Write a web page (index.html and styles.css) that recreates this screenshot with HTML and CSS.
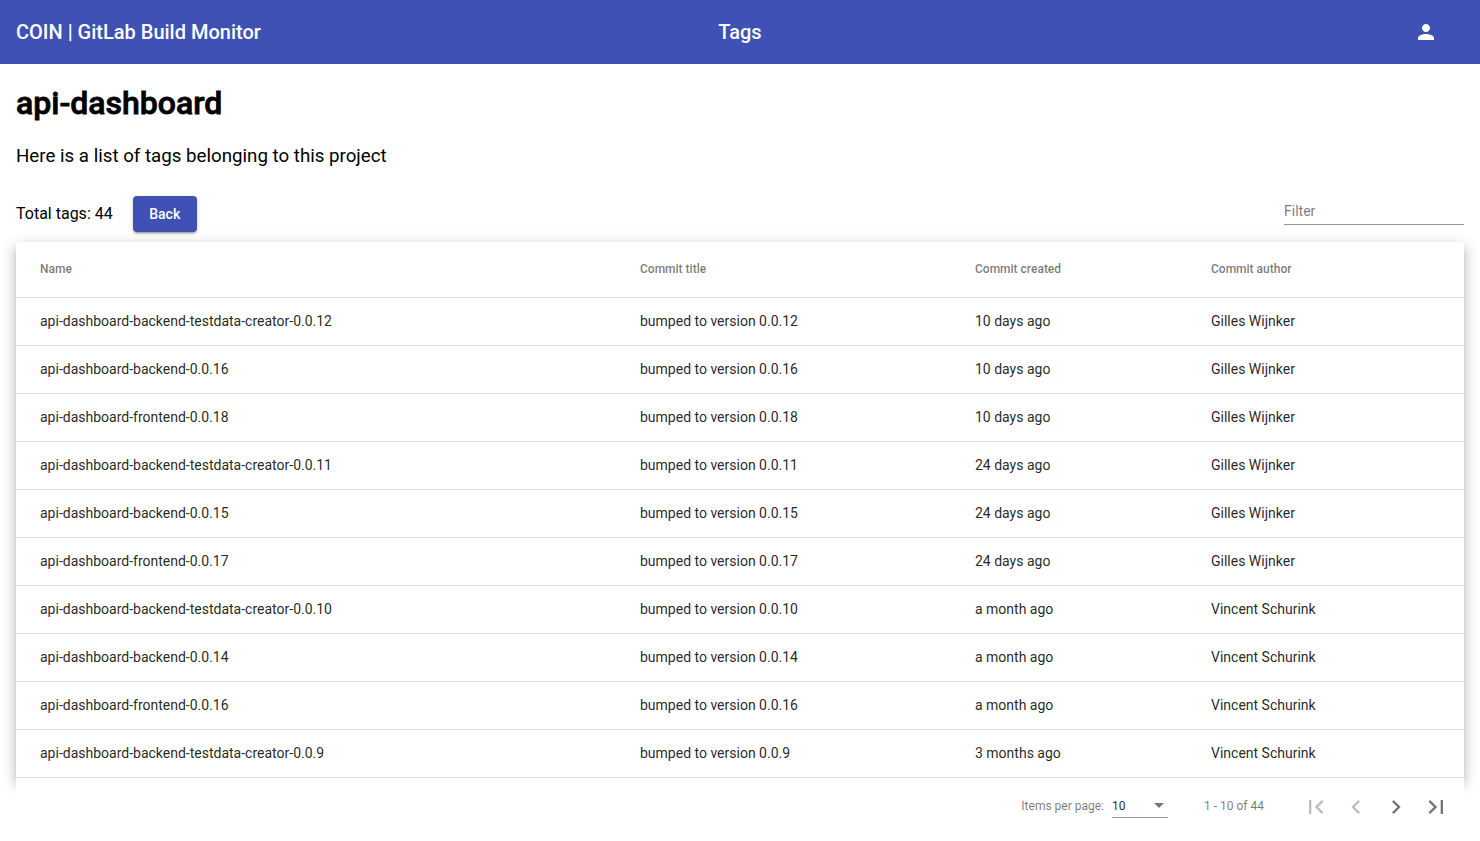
FILE: index.html
```html
<!DOCTYPE html>
<html>
	<head>
		<title>Tags</title>
		<link rel="stylesheet" href="styles.css">
	</head>
	<body>
		<header class="toolbar">
			<span class="brand">COIN | GitLab Build Monitor</span>
			<span class="page-title">Tags</span>
			<span class="user-slot">
				<svg class="user-icon" viewBox="0 0 24 24" width="24" height="24"><path d="M12 12c2.21 0 4-1.79 4-4s-1.79-4-4-4-4 1.79-4 4 1.79 4 4 4zm0 2c-2.67 0-8 1.34-8 4v2h16v-2c0-2.66-5.33-4-8-4z"/></svg>
			</span>
		</header>
		<main class="content">
			<h1>api-dashboard</h1>
			<p class="intro">Here is a list of tags belonging to this project</p>
			<div class="actions">
				<span class="total">Total tags: 44</span>
				<button class="back-button">Back</button>
				<div class="filter"><span>Filter</span></div>
			</div>
			<table class="tags-table">
				<colgroup>
					<col class="col-name">
					<col class="col-title">
					<col class="col-created">
					<col class="col-author">
				</colgroup>
				<thead>
					<tr><th>Name</th><th>Commit title</th><th>Commit created</th><th>Commit author</th></tr>
				</thead>
				<tbody>
					<tr><td>api-dashboard-backend-testdata-creator-0.0.12</td><td>bumped to version 0.0.12</td><td>10 days ago</td><td>Gilles Wijnker</td></tr>
					<tr><td>api-dashboard-backend-0.0.16</td><td>bumped to version 0.0.16</td><td>10 days ago</td><td>Gilles Wijnker</td></tr>
					<tr><td>api-dashboard-frontend-0.0.18</td><td>bumped to version 0.0.18</td><td>10 days ago</td><td>Gilles Wijnker</td></tr>
					<tr><td>api-dashboard-backend-testdata-creator-0.0.11</td><td>bumped to version 0.0.11</td><td>24 days ago</td><td>Gilles Wijnker</td></tr>
					<tr><td>api-dashboard-backend-0.0.15</td><td>bumped to version 0.0.15</td><td>24 days ago</td><td>Gilles Wijnker</td></tr>
					<tr><td>api-dashboard-frontend-0.0.17</td><td>bumped to version 0.0.17</td><td>24 days ago</td><td>Gilles Wijnker</td></tr>
					<tr><td>api-dashboard-backend-testdata-creator-0.0.10</td><td>bumped to version 0.0.10</td><td>a month ago</td><td>Vincent Schurink</td></tr>
					<tr><td>api-dashboard-backend-0.0.14</td><td>bumped to version 0.0.14</td><td>a month ago</td><td>Vincent Schurink</td></tr>
					<tr><td>api-dashboard-frontend-0.0.16</td><td>bumped to version 0.0.16</td><td>a month ago</td><td>Vincent Schurink</td></tr>
					<tr><td>api-dashboard-backend-testdata-creator-0.0.9</td><td>bumped to version 0.0.9</td><td>3 months ago</td><td>Vincent Schurink</td></tr>
				</tbody>
			</table>
			<div class="paginator">
				<span class="per-page-label">Items per page:</span>
				<div class="per-page-select"><span>10</span><i class="arrow"></i></div>
				<span class="range">1 - 10 of 44</span>
				<div class="pager-buttons">
					<button class="pager-button" disabled><svg viewBox="0 0 24 24" width="28" height="28"><path d="M18.41 16.59L13.82 12l4.59-4.59L17 6l-6 6 6 6zM6 6h2v12H6z"/></svg></button>
					<button class="pager-button" disabled><svg viewBox="0 0 24 24" width="28" height="28"><path d="M15.41 7.41L14 6l-6 6 6 6 1.41-1.41L10.83 12z"/></svg></button>
					<button class="pager-button"><svg viewBox="0 0 24 24" width="28" height="28"><path d="M10 6L8.59 7.41 13.17 12l-4.58 4.59L10 18l6-6z"/></svg></button>
					<button class="pager-button"><svg viewBox="0 0 24 24" width="28" height="28"><path d="M5.59 7.41L10.18 12l-4.59 4.59L7 18l6-6-6-6zM16 6h2v12h-2z"/></svg></button>
				</div>
			</div>
		</main>
	</body>
</html>
```

FILE: styles.css
```css
body {
	margin: 0;
	font-family: Roboto, "Helvetica Neue", sans-serif;
	color: rgba(0,0,0,0.87);
	background-color: #fff;
}

.toolbar {
	height: 64px;
	padding: 0 16px;
	display: grid;
	grid-template-columns: 1fr auto 1fr;
	align-items: center;
	background-color: #3f51b5;
	color: #fff;
	font-size: 20px;
	font-weight: 500;
}

.user-slot {
	display: flex;
	justify-content: flex-end;
	padding-right: 26px;
}

.user-icon {
	fill: #fff;
}

.content {
	padding: 0 16px;
}

h1 {
	margin: 0;
	padding-top: 19px;
	font-size: 32px;
	line-height: 40px;
	font-weight: 500;
	-webkit-text-stroke: 0.8px #000;
	color: #000;
}

.intro {
	margin: 0;
	padding-top: 21px;
	font-size: 18.72px;
	line-height: 24px;
	color: #000;
}

.actions {
	display: flex;
	align-items: flex-start;
	height: 46px;
	margin-top: 28px;
	font-size: 16px;
}

.total {
	line-height: 36px;
	color: #000;
}

.back-button {
	margin-left: 20px;
	height: 36px;
	width: 64px;
	border: 0;
	border-radius: 4px;
	background-color: #3f51b5;
	color: #fff;
	font-family: inherit;
	font-size: 14px;
	font-weight: 500;
	box-shadow: 0 3px 1px -2px rgba(0,0,0,.2), 0 2px 2px 0 rgba(0,0,0,.14), 0 1px 5px 0 rgba(0,0,0,.12);
}

.filter {
	margin-left: auto;
	width: 180px;
	height: 29px;
	box-sizing: border-box;
	border-bottom: 1px solid #949494;
	font-size: 14px;
	line-height: 30px;
	color: rgba(0,0,0,0.54);
}

.tags-table {
	width: 100%;
	table-layout: fixed;
	border-collapse: separate;
	border-spacing: 0;
	background-color: #fff;
	box-shadow: 0 5px 5px -3px rgba(0,0,0,.2), 0 8px 10px 1px rgba(0,0,0,.14), 0 3px 14px 2px rgba(0,0,0,.12);
}

.col-name { width: 600px; }
.col-title { width: 335px; }
.col-created { width: 236px; }

th, td {
	box-sizing: border-box;
	padding: 0 0 2px 24px;
	text-align: left;
	border-bottom: 1px solid #e0e0e0;
}

th {
	height: 56px;
	font-size: 12px;
	font-weight: 500;
	color: rgba(0,0,0,0.54);
}

td {
	height: 48px;
	font-size: 14px;
}

.paginator {
	position: relative;
	display: flex;
	align-items: center;
	justify-content: flex-end;
	height: 56px;
	padding-right: 8px;
	background-color: #fff;
	font-size: 12px;
	color: rgba(0,0,0,0.54);
}

.per-page-select {
	display: flex;
	align-items: center;
	justify-content: space-between;
	box-sizing: border-box;
	width: 56px;
	height: 24px;
	margin: 0 0 0 8px;
	border-bottom: 1px solid #949494;
	color: rgba(0,0,0,0.87);
}

.arrow {
	margin-right: 4px;
	border-left: 5px solid transparent;
	border-right: 5px solid transparent;
	border-top: 5px solid rgba(0,0,0,0.54);
}

.range {
	margin: 0 32px 0 36px;
}

.pager-buttons {
	display: flex;
	padding-top: 2px;
}

.pager-button {
	display: flex;
	align-items: center;
	justify-content: center;
	width: 40px;
	height: 40px;
	padding: 0;
	border: 0;
	background: none;
}

.pager-button svg {
	fill: rgba(0,0,0,0.54);
}

.pager-button:disabled svg {
	fill: rgba(0,0,0,0.26);
}
```
